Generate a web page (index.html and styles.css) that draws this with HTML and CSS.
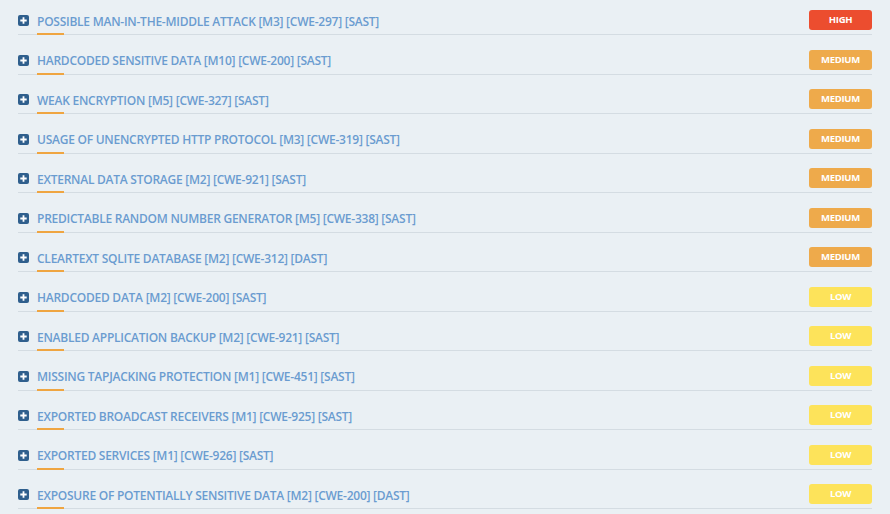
FILE: index.html
```html
<!DOCTYPE html>
<html>
<head>
<meta charset="utf-8">
<link rel="stylesheet" href="styles.css">
</head>
<body>
<ul class="list">
  <li class="row"><svg class="plus" viewBox="0 0 11 11"><rect width="11" height="11" rx="2"/><path d="M5.5 2.3v6.4M2.3 5.5h6.4"/></svg><span class="title">POSSIBLE MAN-IN-THE-MIDDLE ATTACK [M3] [CWE-297] [SAST]</span><span class="badge high">HIGH</span></li>
  <li class="row"><svg class="plus" viewBox="0 0 11 11"><rect width="11" height="11" rx="2"/><path d="M5.5 2.3v6.4M2.3 5.5h6.4"/></svg><span class="title">HARDCODED SENSITIVE DATA [M10] [CWE-200] [SAST]</span><span class="badge medium">MEDIUM</span></li>
  <li class="row"><svg class="plus" viewBox="0 0 11 11"><rect width="11" height="11" rx="2"/><path d="M5.5 2.3v6.4M2.3 5.5h6.4"/></svg><span class="title">WEAK ENCRYPTION [M5] [CWE-327] [SAST]</span><span class="badge medium">MEDIUM</span></li>
  <li class="row"><svg class="plus" viewBox="0 0 11 11"><rect width="11" height="11" rx="2"/><path d="M5.5 2.3v6.4M2.3 5.5h6.4"/></svg><span class="title">USAGE OF UNENCRYPTED HTTP PROTOCOL [M3] [CWE-319] [SAST]</span><span class="badge medium">MEDIUM</span></li>
  <li class="row"><svg class="plus" viewBox="0 0 11 11"><rect width="11" height="11" rx="2"/><path d="M5.5 2.3v6.4M2.3 5.5h6.4"/></svg><span class="title">EXTERNAL DATA STORAGE [M2] [CWE-921] [SAST]</span><span class="badge medium">MEDIUM</span></li>
  <li class="row"><svg class="plus" viewBox="0 0 11 11"><rect width="11" height="11" rx="2"/><path d="M5.5 2.3v6.4M2.3 5.5h6.4"/></svg><span class="title">PREDICTABLE RANDOM NUMBER GENERATOR [M5] [CWE-338] [SAST]</span><span class="badge medium">MEDIUM</span></li>
  <li class="row"><svg class="plus" viewBox="0 0 11 11"><rect width="11" height="11" rx="2"/><path d="M5.5 2.3v6.4M2.3 5.5h6.4"/></svg><span class="title">CLEARTEXT SQLITE DATABASE [M2] [CWE-312] [DAST]</span><span class="badge medium">MEDIUM</span></li>
  <li class="row"><svg class="plus" viewBox="0 0 11 11"><rect width="11" height="11" rx="2"/><path d="M5.5 2.3v6.4M2.3 5.5h6.4"/></svg><span class="title">HARDCODED DATA [M2] [CWE-200] [SAST]</span><span class="badge low">LOW</span></li>
  <li class="row"><svg class="plus" viewBox="0 0 11 11"><rect width="11" height="11" rx="2"/><path d="M5.5 2.3v6.4M2.3 5.5h6.4"/></svg><span class="title">ENABLED APPLICATION BACKUP [M2] [CWE-921] [SAST]</span><span class="badge low">LOW</span></li>
  <li class="row"><svg class="plus" viewBox="0 0 11 11"><rect width="11" height="11" rx="2"/><path d="M5.5 2.3v6.4M2.3 5.5h6.4"/></svg><span class="title">MISSING TAPJACKING PROTECTION [M1] [CWE-451] [SAST]</span><span class="badge low">LOW</span></li>
  <li class="row"><svg class="plus" viewBox="0 0 11 11"><rect width="11" height="11" rx="2"/><path d="M5.5 2.3v6.4M2.3 5.5h6.4"/></svg><span class="title">EXPORTED BROADCAST RECEIVERS [M1] [CWE-925] [SAST]</span><span class="badge low">LOW</span></li>
  <li class="row"><svg class="plus" viewBox="0 0 11 11"><rect width="11" height="11" rx="2"/><path d="M5.5 2.3v6.4M2.3 5.5h6.4"/></svg><span class="title">EXPORTED SERVICES [M1] [CWE-926] [SAST]</span><span class="badge low">LOW</span></li>
  <li class="row"><svg class="plus" viewBox="0 0 11 11"><rect width="11" height="11" rx="2"/><path d="M5.5 2.3v6.4M2.3 5.5h6.4"/></svg><span class="title">EXPOSURE OF POTENTIALLY SENSITIVE DATA [M2] [CWE-200] [DAST]</span><span class="badge low">LOW</span></li>
</ul>
</body>
</html>
```
FILE: styles.css
```css
html, body {
  margin: 0;
  padding: 0;
  background: #eaf0f4;
  height: 100%;
  overflow: hidden;
}
.list {
  list-style: none;
  margin: 0;
  padding: 0 18px 0 18px;
  width: 854px;
  font-family: "Open Sans", "Liberation Sans", sans-serif;
}
.row {
  position: relative;
  display: flex;
  align-items: center;
  box-sizing: border-box;
  height: 35px;
  padding-top: 8px;
  border-bottom: 1px solid #d4dce2;
  margin-bottom: 4.5px;
}
.row::after {
  content: "";
  position: absolute;
  left: 19px;
  bottom: -1px;
  width: 27px;
  height: 2px;
  background: #efa541;
}
.plus {
  width: 11px;
  height: 11px;
  flex: none;
  margin-right: 8px;
  margin-bottom: 1px;
}
.plus rect { fill: #2f5f8d; }
.plus path { stroke: #ffffff; stroke-width: 1.8; fill: none; }
.title {
  flex: 1;
  font-size: 12px;
  font-weight: 600;
  letter-spacing: -0.25px;
  color: #6a9cd0;
  line-height: 14px;
  padding-top: 1px;
}
.badge {
  flex: none;
  width: 63px;
  height: 20px;
  margin-top: -2px;
  border-radius: 3px;
  color: #ffffff;
  font-size: 9.5px;
  font-weight: 700;
  line-height: 20px;
  text-align: center;
  letter-spacing: -0.3px;
}
.high { background: #ec4d2f; }
.medium { background: #eeaa4b; }
.low { background: #fde35a; }
```
